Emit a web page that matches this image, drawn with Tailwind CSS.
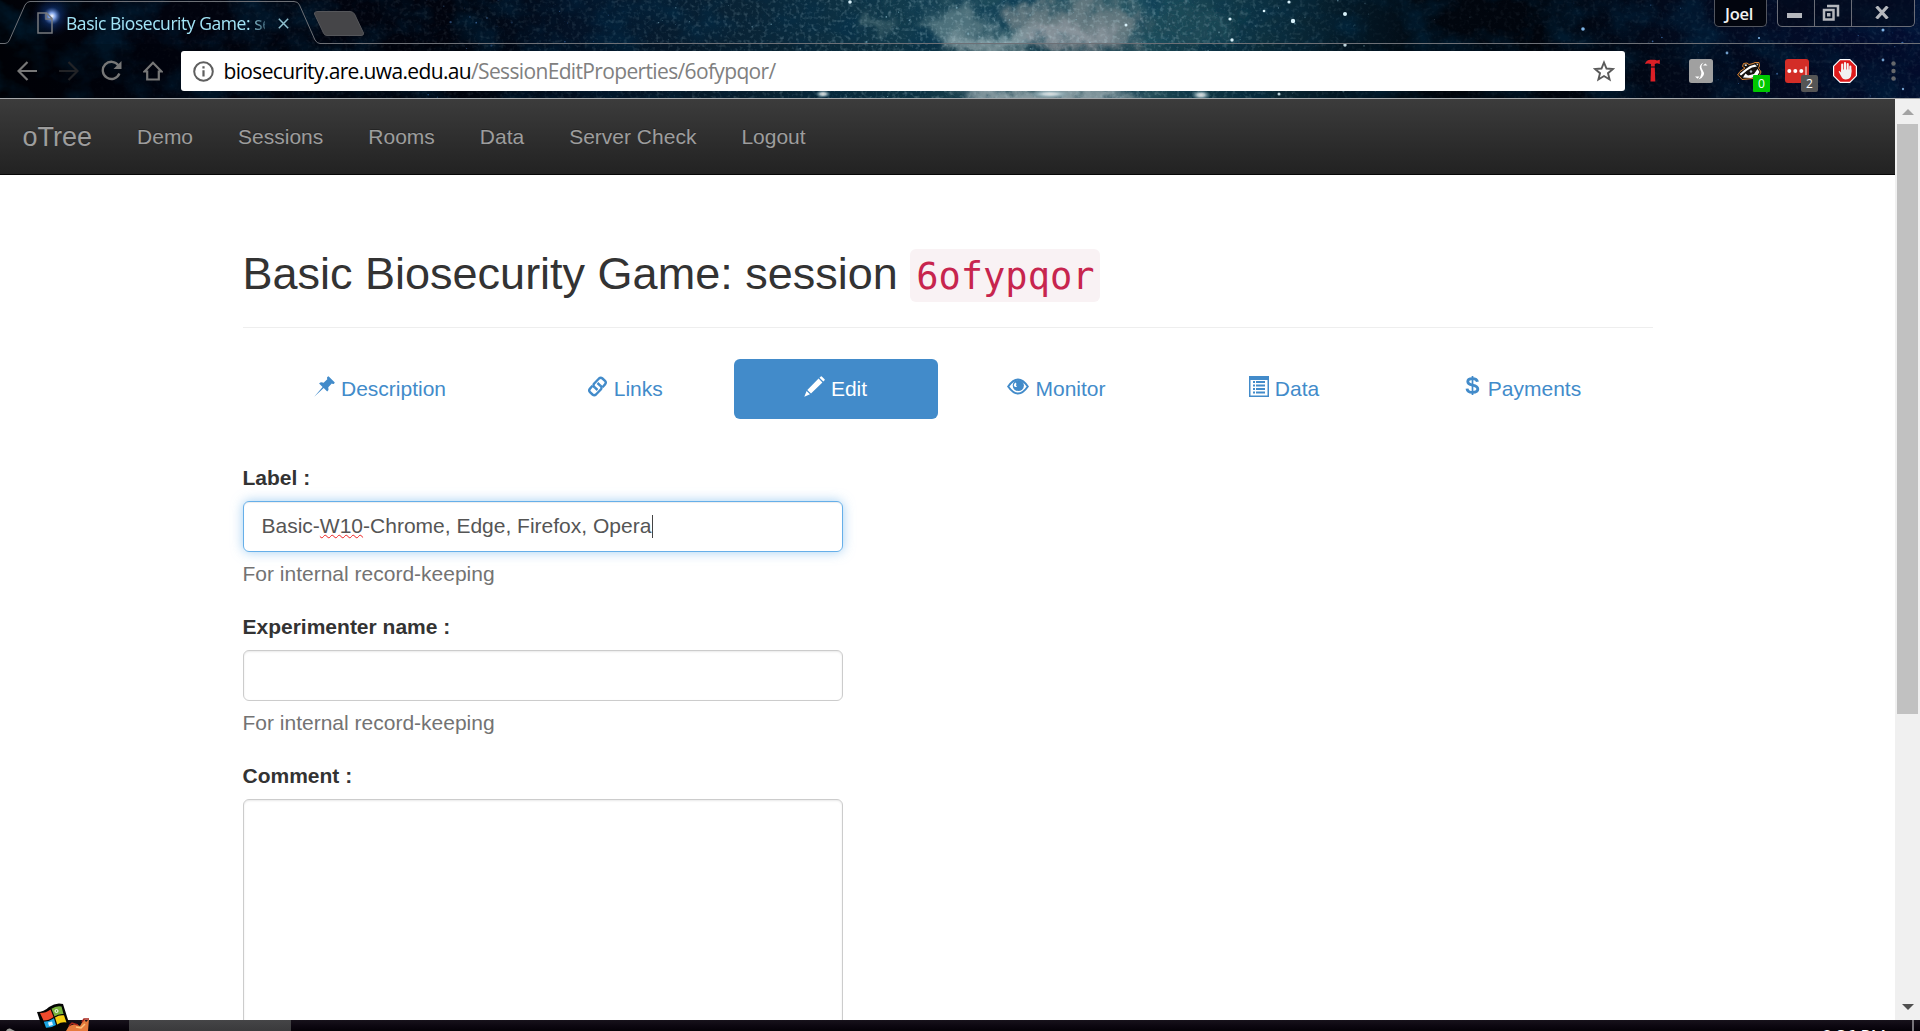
<!DOCTYPE html>
<html lang="en">
<head>
<meta charset="utf-8">
<title>Basic Biosecurity Game: session</title>
<script src="https://cdn.jsdelivr.net/npm/@tailwindcss/browser@4"></script>
</head>
<body class="w-[1920px] h-[1031px] overflow-hidden bg-white flex flex-col font-['Liberation_Sans',Arial,sans-serif] text-[21px] leading-[30px] text-[#333]">

<!-- Browser chrome -->
<header class="relative h-[99px] shrink-0 bg-[#01030a] border-b border-[#a5a8ab] overflow-hidden font-['Open_Sans','Noto_Sans',sans-serif]">
  <svg class="absolute inset-0" width="1920" height="98" viewBox="0 0 1920 98">
    <defs>
      <linearGradient id="sky">
        <stop offset="0" stop-color="#010207"/><stop offset=".08" stop-color="#01030e"/><stop offset=".24" stop-color="#01040e"/>
        <stop offset=".3" stop-color="#031226"/><stop offset=".4" stop-color="#0a2638"/><stop offset=".46" stop-color="#0f3749"/>
        <stop offset=".52" stop-color="#1d4b5a"/><stop offset=".6" stop-color="#215260"/><stop offset=".64" stop-color="#123a48"/>
        <stop offset=".7" stop-color="#041a28"/><stop offset=".75" stop-color="#01060e"/><stop offset=".8" stop-color="#01050d"/>
        <stop offset=".87" stop-color="#020a1c"/><stop offset="1" stop-color="#030d31"/>
      </linearGradient>
      <filter id="cloud" x="0" y="0" width="100%" height="100%">
        <feTurbulence type="fractalNoise" baseFrequency=".022 .03" numOctaves="5" seed="12"/>
        <feColorMatrix values="0 0 0 0 0  0 0 0 0 .03  0 0 0 0 .08  2.6 0 0 0 -1.05"/>
      </filter>
      <filter id="grain" x="0" y="0" width="100%" height="100%">
        <feTurbulence type="fractalNoise" baseFrequency=".25" numOctaves="3" seed="5"/>
        <feColorMatrix values="0 0 0 0 .55  0 0 0 0 .75  0 0 0 0 .82  0 2.2 0 0 -1.1"/>
      </filter>
      <filter id="wisp" x="-20%" y="-50%" width="140%" height="200%">
        <feTurbulence type="fractalNoise" baseFrequency=".04" numOctaves="5" seed="8" result="n"/>
        <feGaussianBlur in="SourceGraphic" stdDeviation="7" result="b"/>
        <feDisplacementMap in="b" in2="n" scale="50" xChannelSelector="R" yChannelSelector="G"/>
      </filter>
      <linearGradient id="mid"><stop offset="0" stop-color="#000"/><stop offset=".3" stop-color="#555"/><stop offset=".5" stop-color="#ccc"/><stop offset=".6" stop-color="#ccc"/><stop offset=".72" stop-color="#222"/><stop offset="1" stop-color="#444"/></linearGradient>
      <mask id="m"><rect width="1920" height="98" fill="url(#mid)"/></mask>
      <radialGradient id="flare"><stop offset="0" stop-color="#fff"/><stop offset=".15" stop-color="#8fb4ff" stop-opacity=".9"/><stop offset=".4" stop-color="#143a8c" stop-opacity=".45"/><stop offset="1" stop-color="#06133a" stop-opacity="0"/></radialGradient>
      <radialGradient id="glow"><stop offset="0" stop-color="#fff"/><stop offset=".35" stop-color="#e3f5fa" stop-opacity=".85"/><stop offset="1" stop-color="#7fb2c2" stop-opacity="0"/></radialGradient>
    </defs>
    <rect width="1920" height="98" fill="url(#sky)"/>
    <rect width="1920" height="98" filter="url(#cloud)" opacity=".45"/>
    <g filter="url(#wisp)">
      <ellipse cx="1078" cy="24" rx="66" ry="28" fill="#64787f"/>
      <ellipse cx="1070" cy="38" rx="50" ry="12" fill="#8b959d"/>
      <ellipse cx="990" cy="44" rx="42" ry="12" fill="#8ba5ac"/>
      <ellipse cx="1050" cy="96" rx="92" ry="14" fill="#9db2b9"/>
      <ellipse cx="952" cy="22" rx="30" ry="18" fill="#4d717b"/>
      <ellipse cx="880" cy="20" rx="14" ry="10" fill="#3d606b"/>
      <ellipse cx="1190" cy="28" rx="46" ry="12" fill="#1e4a57"/>
    </g>
    <g mask="url(#m)"><rect width="1920" height="98" filter="url(#grain)" opacity=".5"/></g>
    <g id="stars" fill="#9fd0e2"></g>
    <g fill="#d8f1fa">
      <circle cx="1293" cy="21" r="2.2"/><circle cx="1345" cy="14" r="2"/><circle cx="1230" cy="19" r="1.6"/><circle cx="1232" cy="40" r="1.7"/><circle cx="1264" cy="11" r="1.3"/><circle cx="1289" cy="2" r="1.6"/><circle cx="1345" cy="45" r="1.7"/><circle cx="1126" cy="25" r="1.5"/><circle cx="850" cy="2" r="1.8"/><circle cx="1279" cy="94" r="1.5"/>
    </g>
    <ellipse cx="823" cy="94" rx="8" ry="4" fill="url(#glow)"/>
    <ellipse cx="1201" cy="95" rx="10" ry="5" fill="url(#glow)"/>
    <ellipse cx="1050" cy="94" rx="20" ry="4" fill="url(#glow)"/>
    <g fill="#7fb3e6"><circle cx="1583" cy="29" r="1.8"/><circle cx="1727" cy="53" r="1.4"/><circle cx="1883" cy="30" r="1.5"/><circle cx="1883" cy="60" r="1.4"/><circle cx="1903" cy="89" r="1.2"/><circle cx="1759" cy="38" r="1.1"/></g>
    <circle cx="52" cy="16" r="22" fill="url(#flare)"/>
    <rect y="44" width="1920" height="54" fill="#000" opacity=".12"/>
    <path d="M0 43.5H5Q8 43.5 9.500 40L25 5Q27 1.500 30 1.500H294Q298 1.500 299.500 5L315 40Q317 43.500 320 43.500H1920" fill="none" stroke="#6d7076"/>
    <path d="M318 11.500H350Q353 11.500 354.500 14L363.500 33Q364 35.500 361 35.500H327Q324.500 35.500 323.500 33L314.500 14Q314 11.500 318 11.500Z" fill="#454548" stroke="#55565a"/>
  </svg>

  <div class="relative h-[43px] flex items-start">
    <svg class="ml-[37px] mt-[12px]" width="16" height="22" viewBox="0 0 16 22" fill="none" stroke="#77797d" stroke-width="1.500"><path d="M1 1H9.500L15 6.500V21H1ZM9 1V7H15"/></svg>
    <div class="ml-[13px] mt-[11px] w-[199px] h-[24px] overflow-hidden whitespace-nowrap text-[17.500px] leading-[24px] tracking-[-0.450px] text-[#a3e5f7] [mask-image:linear-gradient(90deg,#000_184px,transparent_206px)]">Basic Biosecurity Game: session</div>
    <svg class="ml-[13px] mt-[18px]" width="11" height="11" viewBox="0 0 11 11" stroke="#8fc0cf" stroke-width="1.500"><path d="M.8 .8 10.200 10.200M10.200 .8 .8 10.200"/></svg>
    <div class="ml-auto w-[53px] h-[27px] rounded-b-[5px] border border-t-0 border-[#53565f] bg-[#02050e] pr-[3px] text-center text-[16.500px] font-semibold leading-[27px] tracking-[-0.300px] text-[#f2f2f2]">Joel</div>
    <div class="ml-[10px] mr-[5px] h-[27px] flex rounded-b-[5px] border border-t-0 border-[#6a6d77] bg-[#030817]/60">
      <div class="w-[37px] flex justify-center pt-[13px] pr-[3px] border-r border-[#6a6d77]"><div class="w-[15px] h-[5px] bg-[#b5b7bd]"></div></div>
      <div class="w-[37px] flex justify-center pt-[4px] pr-[4px] border-r border-[#6a6d77]">
        <svg width="18" height="17" viewBox="0 0 18 17" fill="none" stroke="#b5b7bd"><path d="M5 2H16V12.500" stroke-width="2.500"/><rect x="2" y="6" width="9.500" height="9.500" stroke-width="2.500"/><rect x="5.500" y="9.500" width="2.500" height="2.500" fill="#b5b7bd"/></svg>
      </div>
      <div class="w-[62px] flex justify-center pt-[6px] pr-[2px]"><svg width="14" height="13" viewBox="0 0 14 13" stroke="#b5b7bd" stroke-width="3.200"><path d="M1.500 .5 12.500 12.500M12.500 .5 1.500 12.500"/></svg></div>
    </div>
  </div>

  <div class="relative h-[55px] flex items-center">
    <svg class="ml-[17px]" width="20" height="20" viewBox="0 0 20 20" fill="none" stroke="#777" stroke-width="2.200"><path d="M20 10H2M10.500 1 1.500 10 10.500 19"/></svg>
    <svg class="ml-[22px]" width="20" height="20" viewBox="0 0 20 20" fill="none" stroke="#222326" stroke-width="2.200"><path d="M0 10H18M9.500 1 18.500 10 9.500 19"/></svg>
    <svg class="ml-[22px]" width="21" height="21" viewBox="0 0 21 21"><path d="M17.500 5.500A8.600 8.600 0 1 0 18.400 13.500" fill="none" stroke="#777" stroke-width="2.300"/><path d="M20.500 1V9H12.500Z" fill="#777"/></svg>
    <svg class="ml-[21px]" width="20" height="20" viewBox="0 0 20 20" fill="none" stroke="#777" stroke-width="2.200"><path d="M10 1.800 1.500 10.500H4.200V18.500H15.800V10.500H18.500Z"/></svg>
    <div class="ml-[18px] mt-px w-[1444px] h-[40px] flex items-center rounded-[3px] bg-white">
      <svg class="ml-[12px]" width="21" height="21" viewBox="0 0 21 21"><circle cx="10.500" cy="10.500" r="9.300" fill="none" stroke="#5f5f5f" stroke-width="2"/><path d="M9.400 9.300H11.600V15.500H9.400ZM9.400 5.300H11.600V7.500H9.400Z" fill="#5f5f5f"/></svg>
      <div class="ml-[9.500px] whitespace-nowrap text-[21px] leading-[30px] tracking-[-0.650px] text-[#808080]"><span class="text-black">biosecurity.are.uwa.edu.au</span>/SessionEditProperties/6ofypqor/</div>
      <svg class="ml-auto mr-[10px]" width="22" height="22" viewBox="0 0 22 22"><path d="M11 2.500 13.500 8.500 20 9 15 13.200 16.600 19.500 11 16 5.400 19.500 7 13.200 2 9 8.500 8.500Z" fill="none" stroke="#5a5a5a" stroke-width="1.900"/></svg>
    </div>
    <svg class="ml-[20px]" width="15" height="23" viewBox="0 0 15 23" fill="#dc1f26"><path d="M0 5Q1.500 .8 5.500 .8H10L12 1.500 14.800 .8V5L12 4.300 9.800 5V7.500H6V5Q3 3.800 0 5ZM6 8.500H9.800L10.300 22.500H5.500Z"/></svg>
    <svg class="ml-[29px]" width="24" height="24" viewBox="0 0 24 24"><rect width="24" height="24" rx="2.500" fill="#a0a0a0"/><path d="M14.500 3.500Q9 6.500 11.500 11 14 15 9.500 20.500 18 17 13.300 10.500 11 7 14.500 3.500Z" fill="#fff"/><path d="M14 6.500 16.300 4.500 18.500 6.500ZM6 17.500H10.500L8.500 19.800Z" fill="#fff"/></svg>
    <div class="relative ml-[24px] w-[24px] h-[24px]">
      <svg width="25" height="24" viewBox="0 0 25 24">
        <path d="M.6 16 3 12.500 8 9 5.500 7.500 6.500 4.500 10 4 12 5.500 16 4.500 18 3.500 22 3.500 22.500 7 21.500 9 24 13 22 17 16 19.500 5 20.500 3 18Z" fill="#16120f" stroke="#d98435" stroke-width="1"/>
        <path d="M2.500 15 8 10.500 13 7 18 5.500 20 7.500 15 8.500 10 11.500 4 16.500ZM6 18.500 8.500 14.500 11 16.500 17 15 20.500 10 22.500 13 20 17 14 19Z" fill="#fff"/>
        <path d="M7.500 5.500 9.500 5.300 10 6.800 8 7ZM19 4.800H21L20.800 6.500Z" fill="#eee"/>
        <circle cx="14" cy="12.500" r="1.200" fill="#aeb6bd"/>
      </svg>
      <span class="absolute left-[16px] top-[16px] w-[17px] h-[17px] rounded-[1px] bg-[#00c800] text-center text-[12px] leading-[18px] text-white">0</span>
    </div>
    <div class="relative ml-[24px] w-[24px] h-[24px] rounded-[3px] bg-[#d32d27]">
      <svg width="24" height="24" viewBox="0 0 24 24" fill="#fff"><circle cx="4.300" cy="12" r="2"/><circle cx="10.300" cy="12" r="2"/><circle cx="16.300" cy="12" r="2"/><rect x="20.500" y="7.500" width="1" height="9"/></svg>
      <span class="absolute left-[16px] top-[16px] w-[17px] h-[17px] rounded-[2px] bg-[#555] text-center text-[12px] leading-[18px] text-white">2</span>
    </div>
    <svg class="ml-[24px]" width="24" height="24" viewBox="0 0 24 24"><path d="M7.200 .6H16.800L23.400 7.200V16.800L16.800 23.400H7.200L.6 16.800V7.200Z" fill="#e01a1a" stroke="#fff" stroke-width="1.200"/><path d="M9.200 12V5.500M12 11.500V4M14.700 12V5M17.300 13V7.500" stroke="#f4f4f4" stroke-width="2.100" stroke-linecap="round"/><path d="M8.100 10.500H18.400V14Q18.400 20.500 12.800 20.500 9.500 20.500 8 17L5.600 12.500Q6.500 11 8.100 13.500Z" fill="#f1f1f1"/></svg>
    <svg class="ml-[34px]" width="5" height="20" viewBox="0 0 5 20" fill="#66686c"><circle cx="2.500" cy="2.500" r="2.200"/><circle cx="2.500" cy="10" r="2.200"/><circle cx="2.500" cy="17.500" r="2.200"/></svg>
  </div>
</header>

<!-- Page viewport with scrollbar -->
<div class="h-[921px] shrink-0 flex overflow-hidden">
  <main class="w-[1895px] h-full overflow-hidden">
    <nav class="h-[76px] flex border-b border-[#080808] bg-linear-to-b from-[#3c3c3c] to-[#222] text-[#9d9d9d] [text-shadow:0_-1px_0_rgba(0,0,0,.25)]">
      <a class="px-[22.500px] py-[22.500px] text-[27px]">oTree</a>
      <a class="px-[22.500px] py-[22.500px]">Demo</a>
      <a class="px-[22.500px] py-[22.500px]">Sessions</a>
      <a class="px-[22.500px] py-[22.500px]">Rooms</a>
      <a class="px-[22.500px] py-[22.500px]">Data</a>
      <a class="px-[22.500px] py-[22.500px]">Server Check</a>
      <a class="px-[22.500px] py-[22.500px]">Logout</a>
    </nav>

    <div class="w-[1410px] ml-[242.500px]">
      <div class="h-[153px] pt-[73.500px] border-b border-[#eee]">
        <h2 class="h-[50px] whitespace-nowrap text-[45px] leading-[49.500px]">Basic Biosecurity Game: session <code class="rounded-[6px] bg-[#f9f2f4] px-[6px] pt-[6px] pb-[4px] font-['DejaVu_Sans_Mono',monospace] text-[37px] leading-none text-[#c7254e]">6ofypqor</code></h2>
      </div>

      <div class="mt-[31px] h-[60px] flex text-[#428bca]">
        <a class="w-[275px] flex justify-center items-center gap-[6px]">
          <svg class="-mt-[5px]" width="21" height="21" viewBox="0 0 21 21" fill="currentColor"><path d="M14.500 .3 20.800 6.500 20 7.800Q18.600 8.300 17.800 7.600L14.300 11.300Q15.200 14.200 13.200 15.600L9.700 12.100 .2 20.800 8.600 11 5.100 7.500Q6.700 5.600 9.600 6.700L13.300 3.200Q12.700 2 13.300 1Z"/></svg><span>Description</span></a>
        <a class="w-[216.500px] pr-[2px] flex justify-center items-center gap-[6px]">
          <svg class="-mt-[5px]" width="21" height="21" viewBox="0 0 21 21" fill="none" stroke="currentColor" stroke-width="2.400"><path d="M7.500 11.500Q5.800 9.500 7 7.800L12 2.500Q13.700 1 15.500 2.500L18 4.800Q19.600 6.600 18 8.400L15.500 11.200"/><path d="M13.500 9.500Q15.200 11.500 14 13.200L9 18.500Q7.300 20 5.500 18.500L3 16.200Q1.400 14.400 3 12.600L5.500 9.800"/><path d="M10.500 7 13.500 9.800M7.500 11.200 10.500 14"/></svg><span>Links</span></a>
        <a class="w-[204px] pr-px flex justify-center items-center gap-[6px] rounded-[6px] bg-[#428bca] text-white">
          <svg class="-mt-[5px]" width="21" height="21" viewBox="0 0 21 21" fill="currentColor"><path d="M16.800 .4Q17.300 0 17.800 .4L20.600 3.200Q21 3.700 20.600 4.200L19.300 5.500 15.500 1.700ZM14.600 2.600 18.400 6.400 7 17.600 3.300 13.900ZM2.600 14.900 6 18.300 .3 20.800Z"/></svg><span>Edit</span></a>
        <a class="w-[237px] flex justify-center items-center gap-[6px]">
          <svg class="-mt-[5px]" width="22" height="21" viewBox="0 0 22 21"><path d="M1.200 10.500Q6 3.500 11 3.500T20.800 10.500Q16 17.500 11 17.500T1.200 10.500Z" fill="none" stroke="currentColor" stroke-width="2"/><circle cx="11.300" cy="9.500" r="5.600" fill="currentColor"/><path d="M8.500 6.500Q10.500 7.500 10 10.500 8 12 6.800 9.500 7 7.500 8.500 6.500Z" fill="#fff"/><path d="M9.500 7 9 10.500 11 9Z" fill="currentColor"/></svg><span>Monitor</span></a>
        <a class="w-[217px] pl-px flex justify-center items-center gap-[6px]">
          <svg class="-mt-[5px]" width="20" height="21" viewBox="0 0 20 21" fill="currentColor"><path fill-rule="evenodd" d="M0 0H20V21H0ZM1.500 4H18.500V19.500H1.500Z"/><path d="M4 5H6V7H4ZM7 5H16V7H7ZM4 8.500H6V10.500H4ZM7 8.500H16V10.500H7ZM4 12H6V14H4ZM7 12H16V14H7ZM4 15.500H6V17.500H4ZM7 15.500H16V17.500H7Z"/></svg><span>Data</span></a>
        <a class="w-[260px] flex justify-center items-center gap-[4px]">
          <svg class="-mt-[7px]" width="21" height="21" viewBox="0 0 21 21" fill="none" stroke="currentColor"><path d="M9.500 1V20" stroke-width="1.700"/><path d="M14.500 6.800Q13.800 3.600 9.500 3.600 4.800 3.600 4.800 6.600 4.800 9.200 9.500 10.100 14.800 11.200 14.800 14.100 14.800 17.400 9.500 17.400 4.500 17.400 4 13.600" stroke-width="2.900"/></svg><span>Payments</span></a>
      </div>

      <form class="mt-[44px] w-[600px] flex flex-col gap-[23px]">
        <div>
          <label class="block mb-[7.500px] font-bold">Label :</label>
          <div class="h-[51px] flex items-center rounded-[6px] border border-[#66afe9] pl-[18px] text-[#555] whitespace-pre shadow-[inset_0_1px_1px_rgba(0,0,0,.075),0_0_12px_rgba(102,175,233,.6)]"><span>Basic-<span class="underline decoration-wavy decoration-[#ee2222] decoration-[1px] underline-offset-[1px]">W10</span>-Chrome, Edge, Firefox, Opera</span><span class="ml-px w-px h-[23px] bg-[#444]"></span></div>
          <p class="mt-[7.500px] text-[#737373]">For internal record-keeping</p>
        </div>
        <div>
          <label class="block mb-[7.500px] font-bold">Experimenter name :</label>
          <div class="h-[51px] rounded-[6px] border border-[#ccc] shadow-[inset_0_1px_2px_rgba(0,0,0,.09)]"></div>
          <p class="mt-[7.500px] text-[#737373]">For internal record-keeping</p>
        </div>
        <div>
          <label class="block mb-[7.500px] font-bold">Comment :</label>
          <div class="h-[315px] rounded-[6px] border border-[#ccc] shadow-[inset_0_1px_2px_rgba(0,0,0,.09)]"></div>
        </div>
      </form>
    </div>
  </main>

  <div class="w-[25px] h-full flex flex-col items-center bg-[#f0f0f0]">
    <svg class="mt-[10px]" width="12" height="6" viewBox="0 0 12 6" fill="#a3a3a3"><path d="M6 0 12 6H0Z"/></svg>
    <div class="mt-[9px] w-[21px] h-[590px] bg-[#c1c1c1]"></div>
    <svg class="mt-auto mb-[10px]" width="12" height="6" viewBox="0 0 12 6" fill="#505050"><path d="M0 0H12L6 6Z"/></svg>
  </div>
</div>

<!-- Taskbar -->
<footer class="relative h-[11px] shrink-0 flex bg-linear-to-b from-[#17121b] to-[#050208]">
  <div class="ml-[129px] w-[162px] h-full bg-linear-to-b from-[#454547] to-[#3a3a3c]"></div>
  <div class="ml-auto mr-[26px] h-[11px] overflow-hidden pt-[7px] text-[17px] leading-[17px] text-white font-['Open_Sans',sans-serif]">2:36 PM</div>
  <div class="w-[2px] mr-[6px] h-full bg-[#77747a]"></div>
  <svg class="absolute left-0 -top-[20px]" width="100" height="31" viewBox="0 0 100 31">
    <path d="M6 31Q7 28 10 28.500L15 31Z" fill="#9a9a96"/>
    <path d="M37 12Q44 12 49 7 56 2 63 4L69 23 72 26 66 31H47L41 24Z" fill="#050505"/>
    <path d="M40 13Q46 13 50.500 9.500L53.500 17Q49 20.500 43.500 20.500Z" fill="#ef4a2d"/>
    <path d="M51.500 8.800Q56 5.500 61.500 6.500L63.500 14Q58.500 13.500 54.500 16.500Z" fill="#79b33d"/>
    <path d="M43.800 21.700Q49.500 21.500 54 18.200L56 25Q51.500 28 46 27.800Z" fill="#1ba5e2"/>
    <path d="M55 17.500Q59.500 14.500 64 15.300L66.500 22.500Q61.500 21.500 57.200 24.500Z" fill="#f5cf13"/>
    <circle cx="56.500" cy="11" r="1.500" fill="none" stroke="#fff"/>
    <path d="M48 22.500 52 21.500 53 25 49 26Z" fill="#d9f3ff"/>
    <path d="M66 31 69 26 75 24 80 26 84 19 86 22 89 19 88 31Z" fill="#e57a3c"/>
    <path d="M69 26 72 23 78 25M82 22 84 19 89 19" stroke="#a7261c" stroke-width="1.500" fill="none"/>
    <path d="M76 27 81 28 85 24" stroke="#ffc27a" stroke-width="1.500" fill="none"/>
  </svg>
</footer>

<script>
  // Seeded scatter of faint stars, denser towards the nebula
  const group = document.getElementById('stars');
  let seed = 7;
  const rnd = () => (seed = (seed * 16807) % 2147483647) / 2147483647;
  for (let i = 0; i < 330; i++) {
    const x = 420 + rnd() * 1500, y = rnd() * 98, keep = rnd(), size = rnd(), glow = rnd();
    if (x > 1370 && x < 1640 && keep > 0.15) continue;
    if (x > 1640 && keep > 0.5) continue;
    const c = document.createElementNS('http://www.w3.org/2000/svg', 'circle');
    c.setAttribute('cx', x.toFixed(1));
    c.setAttribute('cy', y.toFixed(1));
    c.setAttribute('r', (0.4 + size * size * 0.8).toFixed(2));
    c.setAttribute('opacity', (0.15 + glow * 0.55).toFixed(2));
    if (x > 1500 || x < 640) c.setAttribute('fill', '#4f86c9');
    group.appendChild(c);
  }
</script>
</body>
</html>
